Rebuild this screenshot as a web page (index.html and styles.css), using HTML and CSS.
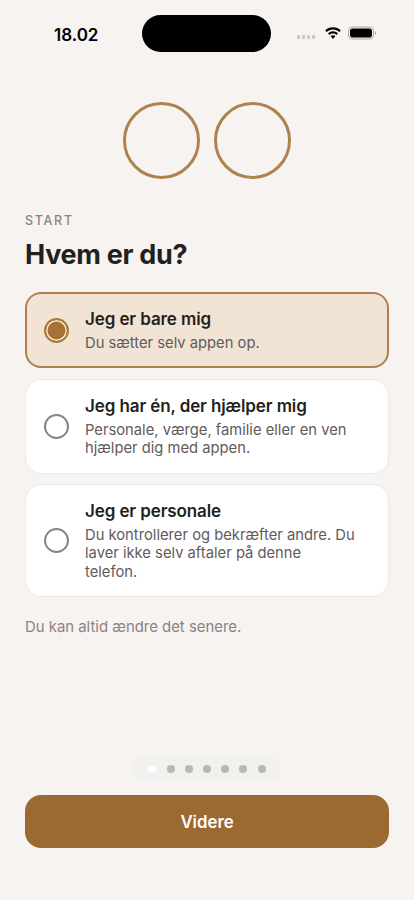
FILE: index.html
```html
<!DOCTYPE html>
<html lang="da">
<head>
<meta charset="utf-8">
<title>Hvem er du?</title>
<link rel="stylesheet" href="styles.css">
</head>
<body>
<div class="screen">
  <header class="status">
    <span class="time">18.02</span>
    <div class="island"></div>
    <div class="status-icons">
      <div class="signal"><i></i><i></i><i></i><i></i></div>
      <svg class="wifi" width="18" height="13" viewBox="0 0 18 13"><path d="M9 2.600c2.400 0 4.600 1 6.200 2.500l1.600-1.700C14.800 1.400 12 .2 9 .2S3.200 1.400 1.200 3.400l1.600 1.700C4.400 3.600 6.600 2.600 9 2.600z"/><path d="M9 6.600c1.300 0 2.500.5 3.400 1.300l1.600-1.700C12.700 4.900 10.900 4.200 9 4.200s-3.700.7-5 2l1.600 1.700c.9-.8 2.100-1.300 3.400-1.300z"/><path d="M9 8.200c-1 0-1.700.3-2.400.9L9 12l2.400-2.900c-.7-.6-1.400-.9-2.400-.9z"/></svg>
      <svg class="battery" width="29" height="14" viewBox="0 0 29 14"><rect x=".5" y="1" width="25" height="12" rx="4" fill="none" stroke="#a8a5a2"/><rect x="2" y="2.500" width="22" height="9" rx="2.800" fill="#000"/><path d="M27 5.200c.8.300 1.200 1 1.200 1.800s-.4 1.500-1.200 1.800z" fill="#a8a5a2"/></svg>
    </div>
  </header>

  <div class="rings"><div class="ring"></div><div class="ring"></div></div>

  <main class="content">
    <p class="eyebrow">START</p>
    <h1 class="title">Hvem er du?</h1>
    <div class="options">
      <div class="option selected">
        <span class="radio on"></span>
        <div class="copy">
          <h2>Jeg er bare mig</h2>
          <p>Du sætter selv appen op.</p>
        </div>
      </div>
      <div class="option">
        <span class="radio"></span>
        <div class="copy">
          <h2>Jeg har én, der hjælper mig</h2>
          <p>Personale, værge, familie eller en ven hjælper dig med appen.</p>
        </div>
      </div>
      <div class="option">
        <span class="radio"></span>
        <div class="copy">
          <h2>Jeg er personale</h2>
          <p>Du kontrollerer og bekræfter andre. Du laver ikke selv aftaler på denne telefon.</p>
        </div>
      </div>
    </div>
    <p class="note">Du kan altid ændre det senere.</p>
  </main>

  <footer class="footer">
    <div class="pager"><i class="active"></i><i></i><i></i><i></i><i></i><i></i><i></i></div>
    <button class="cta" type="button">Videre</button>
  </footer>
</div>
</body>
</html>
```
FILE: styles.css
```css
* { box-sizing: border-box; }
html, body { margin: 0; padding: 0; }
body {
  background: #f7f3f0;
  font-family: Inter, "Liberation Sans", sans-serif;
  color: #231f20;
}
.screen {
  width: 414px;
  height: 900px;
  display: flex;
  flex-direction: column;
  overflow: hidden;
}
.status {
  height: 53px;
  padding-top: 15px;
  display: grid;
  grid-template-columns: 142px 129px 143px;
  align-items: start;
  flex: none;
}
.time {
  margin: 8.500px 0 0 54px;
  font-size: 17px;
  line-height: 22px;
  font-weight: 600;
  color: #000;
}
.island {
  width: 129px;
  height: 37px;
  border-radius: 19px;
  background: #000;
}
.status-icons {
  display: flex;
  align-items: center;
  height: 22px;
  margin-top: 7px;
  padding-left: 25.500px;
}
.signal { display: flex; gap: 1.500px; margin-top: 8px; }
.signal i { width: 3.500px; height: 3.500px; border-radius: 1px; background: #cbc9c7; }
.wifi { margin-left: 9px; fill: #000; margin-top: 1px; }
.battery { margin-left: 6px; margin-top: 0; }

.rings {
  display: flex;
  justify-content: center;
  gap: 14px;
  margin-top: 49px;
  flex: none;
}
.ring {
  width: 77px;
  height: 77px;
  border: 3px solid #ae814e;
  border-radius: 50%;
}
.content {
  padding: 0 25px;
  flex: 1;
}
.eyebrow {
  margin: 34px 0 0;
  font-size: 12.500px;
  line-height: 16px;
  font-weight: 500;
  letter-spacing: 1.700px;
  color: #8d8283;
}
.title {
  margin: 8px 0 0;
  font-size: 27px;
  line-height: 36px;
  font-weight: 700;
  letter-spacing: -0.3px;
  color: #231f20;
}
.options {
  margin-top: 18.800px;
  display: flex;
  flex-direction: column;
  gap: 10.300px;
}
.option {
  display: flex;
  align-items: center;
  gap: 16.500px;
  padding: 15px 32px 15px 17.500px;
  background: #fff;
  border: 1px solid #eee8e3;
  border-radius: 16px;
}
.option.selected {
  background: #f1e4d5;
  border: 2px solid #ae814e;
  padding: 14px 31px 14px 16.500px;
}
.radio {
  flex: none;
  width: 25px;
  height: 25px;
  border-radius: 50%;
  border: 2px solid #8d8283;
}
.radio.on {
  border-color: #ae7a3c;
  background: #a67233;
  box-shadow: inset 0 0 0 1.500px #f5ebdf;
}
.copy { min-width: 0; flex: 1; }
.copy h2 {
  margin: 0;
  font-size: 17px;
  line-height: 23px;
  font-weight: 600;
  letter-spacing: -0.1px;
  color: #231f20;
}
.copy p {
  margin: 3px 0 0;
  font-size: 14.750px;
  line-height: 18.500px;
  font-weight: 400;
  color: #635a5c;
}
.note {
  margin: 21px 0 0;
  font-size: 14.900px;
  line-height: 18px;
  color: #8d8283;
}
.footer {
  flex: none;
  padding: 0 25px 52px;
  display: flex;
  flex-direction: column;
  align-items: center;
  gap: 13px;
}
.pager {
  width: 148px;
  height: 26px;
  border-radius: 13px;
  background: #f1f1ef;
  display: flex;
  align-items: center;
  justify-content: center;
  gap: 10.200px;
}
.pager i {
  width: 8px;
  height: 8px;
  border-radius: 50%;
  background: #b8b7b3;
}
.pager i.active { background: #fff; }
.cta {
  width: 100%;
  height: 53px;
  border: 0;
  border-radius: 16px;
  background: #9b6a32;
  color: #fff;
  font-family: inherit;
  font-size: 16.800px;
  font-weight: 600;
}
```
